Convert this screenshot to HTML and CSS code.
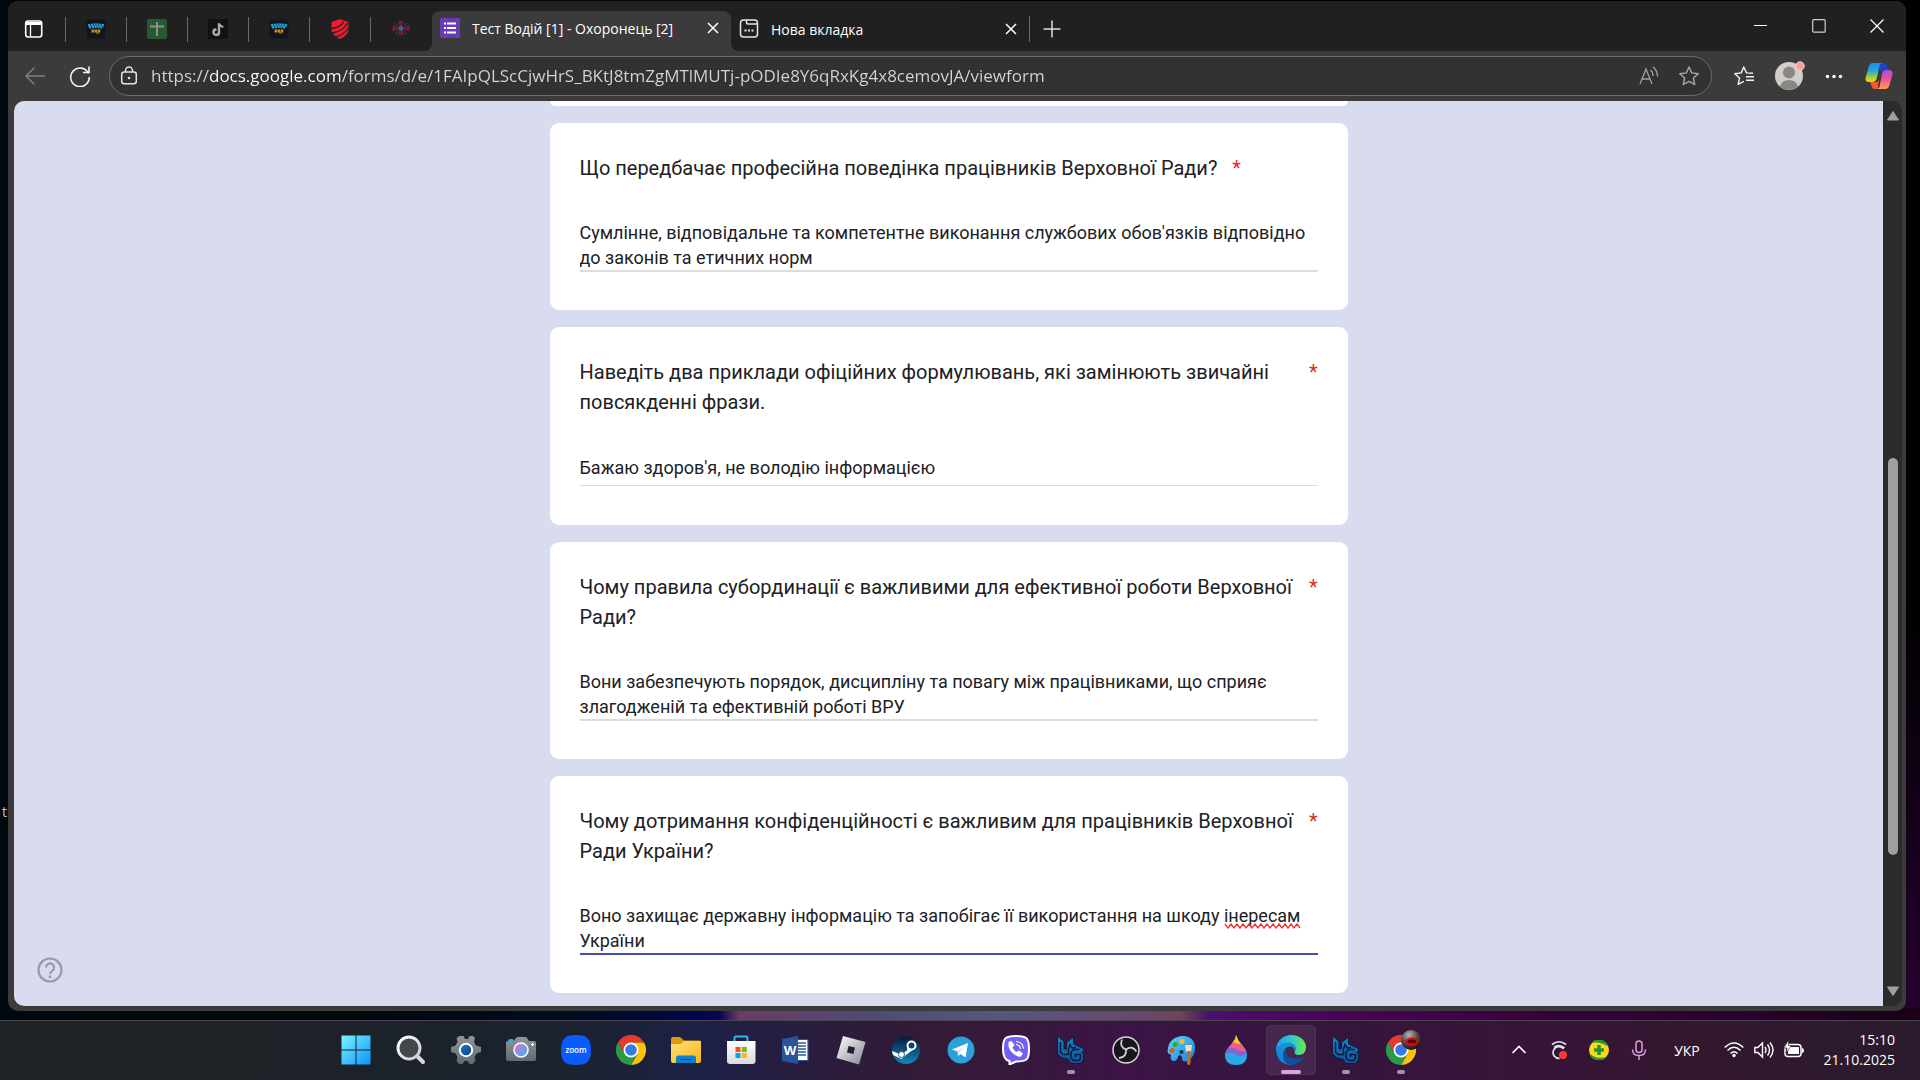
FILE: index.html
```html
<!DOCTYPE html>
<html lang="uk">
<head>
<meta charset="utf-8">
<title>Тест Водій [1] - Охоронець [2]</title>
<link rel="stylesheet" href="styles.css">
</head>
<body>
<svg class="defs" aria-hidden="true">
  <defs>
    <linearGradient id="gWin" x1="0" y1="0" x2="1" y2="1"><stop offset="0" stop-color="#7df3ff"/><stop offset="1" stop-color="#0a94fb"/></linearGradient>
    <linearGradient id="gGear" x1="0" y1="0" x2="0" y2="1"><stop offset="0" stop-color="#8f979d"/><stop offset="1" stop-color="#626a71"/></linearGradient>
    <linearGradient id="gGlass" x1="0" y1="0" x2="1" y2="1"><stop offset="0" stop-color="#ffffff"/><stop offset="1" stop-color="#c4c8cc"/></linearGradient>
    <linearGradient id="gLens" x1="0" y1="0" x2="1" y2="1"><stop offset=".2" stop-color="#c47be0"/><stop offset="1" stop-color="#2fb5ee"/></linearGradient>
    <linearGradient id="gBlue" x1="0" y1="0" x2="1" y2="1"><stop offset="0" stop-color="#1682d0"/><stop offset="1" stop-color="#053c80"/></linearGradient>
    <linearGradient id="gFolder" x1="0" y1="0" x2="1" y2="1"><stop offset="0" stop-color="#ffdf76"/><stop offset="1" stop-color="#f5b81b"/></linearGradient>
    <linearGradient id="gStore" x1="0" y1="0" x2="0" y2="1"><stop offset="0" stop-color="#ffffff"/><stop offset="1" stop-color="#dadada"/></linearGradient>
    <linearGradient id="gRbx" x1="0" y1="0" x2="1" y2="1"><stop offset="0" stop-color="#ffffff"/><stop offset="1" stop-color="#83888e"/></linearGradient>
    <linearGradient id="gSteam" x1="0" y1="0" x2="0" y2="1"><stop offset="0" stop-color="#0b1636"/><stop offset="1" stop-color="#1387b8"/></linearGradient>
    <linearGradient id="gPal" x1="0" y1="0" x2="1" y2="1"><stop offset="0" stop-color="#62d4fb"/><stop offset="1" stop-color="#1583d8"/></linearGradient>
    <linearGradient id="gEdge" x1="0" y1="0" x2="1" y2="0"><stop offset="0" stop-color="#1ba2e8"/><stop offset=".5" stop-color="#2cc5d3"/><stop offset="1" stop-color="#6bea4c"/></linearGradient>
    <linearGradient id="gEdge2" x1="0" y1="0" x2="0" y2="1"><stop offset="0" stop-color="#1792d8"/><stop offset="1" stop-color="#1180dc"/></linearGradient>
    <linearGradient id="gUg" x1="0" y1="0" x2="0" y2="1"><stop offset="0" stop-color="#1587c4"/><stop offset="1" stop-color="#1450a0"/></linearGradient>
    <linearGradient id="gCop1" x1="0" y1="0" x2="0" y2="1"><stop offset="0" stop-color="#1b8cf0"/><stop offset=".4" stop-color="#22a7d8"/><stop offset=".7" stop-color="#8ccb4b"/><stop offset="1" stop-color="#ffd21a"/></linearGradient>
    <linearGradient id="gCop2" x1="0" y1="0" x2="0" y2="1"><stop offset="0" stop-color="#a44ee8"/><stop offset=".5" stop-color="#f0568f"/><stop offset="1" stop-color="#ffa154"/></linearGradient>
    <radialGradient id="gBall" cx=".4" cy=".25" r=".8"><stop offset="0" stop-color="#b9b4b2"/><stop offset=".5" stop-color="#5b4c4c"/><stop offset="1" stop-color="#1c0808"/></radialGradient>
    <symbol id="i-close" viewBox="0 0 20 20"><path d="M5 5l10 10M15 5L5 15" fill="none" stroke="currentColor" stroke-width="1.5"/></symbol>
    <symbol id="i-army" viewBox="0 0 20 20"><rect x=".5" y=".5" width="19" height="19" rx="2.5" fill="#14141f"/><path d="M2 6.500q8-2 16 0M3 8.500q7-1.500 14 0" fill="none" stroke="#1c9fd6" stroke-width="2.400" stroke-dasharray="2.200 .6"/><path d="M5.500 12h9" stroke="#c98d17" stroke-width="3.200" stroke-dasharray="2.600 .5"/><path d="M10 14h3" stroke="#c98d17"/></symbol>
    <symbol id="i-chrome" viewBox="0 0 30 30"><path d="M15 7.500H28A15 15 0 0 0 2 7.500L8.500 18.750z" fill="#e33b2e"/><path d="M28 7.500H15L21.500 18.750 15 30A15 15 0 0 0 28 7.500z" fill="#fdc010"/><path d="M2 7.500L8.500 18.750H21.500L15 30A15 15 0 0 1 2 7.500z" fill="#2c9b48"/><circle cx="15" cy="15" r="7.500" fill="#fff"/><circle cx="15" cy="15" r="5.800" fill="#3b78e7"/></symbol>
    <symbol id="i-ug" viewBox="0 0 30 30"><path d="M1.500 1L8 6.500V14l2.500 0V7.500L17.500 2V9L28.500 14 26 17.500 27.500 19V25L24 28.500H14.500L12.500 24.500 5.500 22.500 1.500 18.500z" fill="url(#gUg)" stroke="#0a1c3c"/><path d="M4.500 7V17L7 19.500H12.500V14L14 9.500 16 13 20 12.500M23.500 14.500H17.500L15 17.500V23L17.500 25.500H22.500L24.500 23.500V19.500H19.500V22" fill="none" stroke="#071a38" stroke-width="1.500"/></symbol>
  </defs>
</svg>

<div class="desktop">
  <span class="desktop-label">tl</span>
  <main class="window">
    <header class="tab-strip">
      <button class="icon-btn workspace" aria-label="Меню вкладок"><svg width="20" height="20" viewBox="0 0 20 20"><rect x="1.700" y="2" width="16" height="16" rx="2.500" fill="none" stroke="#fff" stroke-width="1.600"/><path d="M2 3h15.500v3H2z" fill="#fff"/><path d="M6.500 5v12.500" stroke="#fff" stroke-width="1.300"/></svg></button>
      <nav class="pinned" aria-label="Закріплені вкладки">
        <button class="pin" aria-label="Вкладка 1"><svg width="20" height="20"><use href="#i-army"/></svg></button>
        <button class="pin" aria-label="Вкладка 2"><svg width="20" height="20"><rect width="20" height="20" rx="2" fill="#265b32"/><path d="M10 3v14M3 7.500h14" stroke="#8d8f8d" stroke-width="2"/></svg></button>
        <button class="pin" aria-label="TikTok"><svg width="20" height="20"><rect width="20" height="20" fill="#121212"/><path d="M10.600 4v8.800a2.800 2.800 0 1 1-2.800-2.800M10.600 4q.4 3 4 3.400" fill="none" stroke="#8a2a45" stroke-width="1.800" transform="translate(1 1)"/><path d="M10.600 4v8.800a2.800 2.800 0 1 1-2.800-2.800M10.600 4q.4 3 4 3.400" fill="none" stroke="#4e9a9a" stroke-width="1.800"/><path d="M10.600 4v8.800a2.800 2.800 0 1 1-2.800-2.800M10.600 4q.4 3 4 3.400" fill="none" stroke="#b9b9b9" stroke-width="1.500" transform="translate(.6 .4)"/></svg></button>
        <button class="pin" aria-label="Вкладка 4"><svg width="20" height="20"><use href="#i-army"/></svg></button>
        <button class="pin" aria-label="Вкладка 5"><svg width="20" height="20" viewBox="0 0 20 20"><path d="M1.500 3L10 0l8.500 3v8q-1 6-8.500 9-7-3-8.500-8z" fill="#ea1d2c"/><path d="M1 9.500Q10 9 14 2.500M1.500 14Q12 13 18 4M5 18Q14 16 19 8.500" stroke="#212121" stroke-width="1.300" fill="none"/></svg></button>
        <button class="pin" aria-label="Вкладка 6"><svg width="20" height="20" viewBox="0 0 20 20"><path d="M6.500 2h7l-2.500 5h-2zM6.500 16h7l-2.500-5h-2zM1.500 6l6 2v2.500l-6 2zM18.500 6l-6 2v2.500l6 2z" fill="#6c1b42"/><path d="M4 4l3 3M16 4l-3 3M4 15l3-3M16 15l-3-3" stroke="#4a4040"/><circle cx="10" cy="9.300" r="2.500" fill="#3c6580"/></svg></button>
      </nav>
      <div class="tab active">
        <svg width="20" height="20"><rect width="20" height="20" rx="1" fill="#673ab7"/><path d="M7 5.500h9M7 10h9M7 14.500h9" stroke="#fff" stroke-width="2"/><path d="M4 5.500h2M4 10h2M4 14.500h2" stroke="#fff" stroke-width="2"/></svg>
        <span class="tab-title">Тест Водій [1] - Охоронець [2]</span>
        <button class="icon-btn tab-close" aria-label="Закрити вкладку"><svg width="20" height="20"><use href="#i-close"/></svg></button>
      </div>
      <div class="tab">
        <svg width="20" height="20" viewBox="0 0 20 20" fill="none" stroke="#e6e6e6" stroke-width="1.500"><rect x="1.500" y="1" width="17" height="17" rx="3"/><path d="M7.500 1v2.500q0 1.500 1.500 1.500h9"/><path d="M5.500 11.500h2M9 11.500h2M12.500 11.500h2" stroke-width="2"/></svg>
        <span class="tab-title">Нова вкладка</span>
        <button class="icon-btn tab-close" aria-label="Закрити вкладку"><svg width="20" height="20"><use href="#i-close"/></svg></button>
      </div>
      <button class="icon-btn new-tab" aria-label="Нова вкладка"><svg width="20" height="20"><path d="M10 1.500v17M1.500 10h17" stroke="#ddd" stroke-width="1.500"/></svg></button>
      <div class="window-controls">
        <button class="icon-btn" aria-label="Згорнути"><svg width="14" height="14"><path d="M0 6.500h13" stroke="#fff"/></svg></button>
        <button class="icon-btn" aria-label="Розгорнути"><svg width="14" height="14"><rect x=".7" y=".7" width="12.500" height="12.500" rx="1" fill="none" stroke="#d0d0d0" stroke-width="1.200"/></svg></button>
        <button class="icon-btn" aria-label="Закрити"><svg width="14" height="14"><path d="M.5 .5l13 13M13.500 .5l-13 13" stroke="#fff" stroke-width="1.200"/></svg></button>
      </div>
    </header>

    <div class="toolbar">
      <button class="icon-btn" aria-label="Назад"><svg width="20" height="20" fill="none" stroke="#808080" stroke-width="1.400"><path d="M20 10H1M9.500 1.500L1 10l8.500 8.500"/></svg></button>
      <button class="icon-btn" aria-label="Оновити"><svg width="22" height="22" fill="none" stroke="#f2f2f2" stroke-width="1.600"><path d="M19.500 8.500A9.300 9.300 0 1 0 20.300 12M20 1.500V7.500H14"/></svg></button>
      <div class="address">
        <svg width="20" height="20" fill="none" stroke="#e4e4e4" stroke-width="1.500"><rect x="2.700" y="6" width="14.600" height="11.800" rx="2.500"/><path d="M6.500 6V4.500a3.500 3.500 0 0 1 7 0V6"/><circle cx="10" cy="12" r="1.300" fill="#e4e4e4" stroke="none"/></svg>
        <input class="url" type="text" aria-label="Адреса" value="https://docs.google.com/forms/d/e/1FAIpQLScCjwHrS_BKtJ8tmZgMTlMUTj-pODIe8Y6qRxKg4x8cemovJA/viewform">
        <button class="icon-btn" aria-label="Прочитати вголос"><svg width="20" height="20" fill="none" stroke="#a0a0a0" stroke-width="1.300"><path d="M1 18L7 3l6 15M3 13h8M11.500 4q2.500 2 2.500 6M14 1q4.500 3.500 4.500 9.500"/></svg></button>
        <button class="icon-btn" aria-label="Додати до вибраного"><svg width="20" height="20" fill="none" stroke="#a8a8a8" stroke-width="1.400" stroke-linejoin="round"><path d="M10 1l2.700 5.900 6.500.8-4.800 4.400 1.300 6.400L10 15.400l-5.700 3.100 1.300-6.400L.8 7.700l6.500-.8z"/></svg></button>
      </div>
      <button class="icon-btn" aria-label="Вибране"><svg width="20" height="20" fill="none" stroke="#f2f2f2" stroke-width="1.400" stroke-linejoin="round"><path d="M19 7.300L12.500 6.900 9.800 1 7.200 6.900l-6.400.8 4.700 4.400-1.300 6.400 5.600-3.100M12 10.700h8M12 14.300h8"/></svg></button>
      <button class="icon-btn" aria-label="Профіль"><svg width="32" height="30" viewBox="0 0 32 30"><circle cx="16" cy="15" r="14" fill="#d0cec9"/><circle cx="16" cy="11.500" r="6" fill="#8a8682"/><path d="M7 25.500a9.500 9.500 0 0 1 18 0A14 14 0 0 1 7 25.500" fill="#8a8682"/><circle cx="27" cy="5" r="4.200" fill="#ff9c96" stroke="#e8d8d6"/></svg></button>
      <button class="icon-btn" aria-label="Параметри"><svg width="20" height="20" fill="#fff"><circle cx="3.500" cy="10.500" r="1.700"/><circle cx="10" cy="10.500" r="1.700"/><circle cx="16.500" cy="10.500" r="1.700"/></svg></button>
      <button class="icon-btn" aria-label="Copilot"><svg width="28" height="28" viewBox="0 0 28 28"><path d="M15 1h4q2 0 2.600 2l1.400 5h-4q-3 0-4 3z" fill="#1747c8"/><path d="M5 20h7l2-2-1 7q-.5 1.500 1 2H9.500q-2 0-2.500-2z" fill="#f4592c"/><path d="M8 1h9.500q-2.200.5-2.700 2L12 15.500q-1 4.500-5 4.500H4q-4 0-3.500-4L4 4q1-3 4-3z" fill="url(#gCop1)"/><path d="M20 8h4q4 0 3.500 4L24.500 23q-1 4-4.500 4h-8q2-.5 2.500-2L17 12q1-4 3-4z" fill="url(#gCop2)"/></svg></button>
    </div>

    <div class="viewport">
      <form class="page">
        <section class="card card-tail" aria-hidden="true"></section>
        <section class="card">
          <label class="question" for="a1"><span>Що передбачає професійна поведінка працівників Верховної Ради?</span><span class="required">*</span></label>
          <div class="answer"><textarea id="a1" rows="2" spellcheck="false">Сумлінне, відповідальне та компетентне виконання службових обов'язків відповідно до законів та етичних норм</textarea></div>
        </section>
        <section class="card">
          <label class="question" for="a2"><span>Наведіть два приклади офіційних формулювань, які замінюють звичайні повсякденні фрази.</span><span class="required">*</span></label>
          <div class="answer short"><input id="a2" type="text" spellcheck="false" value="Бажаю здоров'я, не володію інформацією"></div>
        </section>
        <section class="card">
          <label class="question" for="a3"><span>Чому правила субординації є важливими для ефективної роботи Верховної Ради?</span><span class="required">*</span></label>
          <div class="answer"><textarea id="a3" rows="2" spellcheck="false">Вони забезпечують порядок, дисципліну та повагу між працівниками, що сприяє злагодженій та ефективній роботі ВРУ</textarea></div>
        </section>
        <section class="card">
          <label class="question" for="a4"><span>Чому дотримання конфіденційності є важливим для працівників Верховної Ради України?</span><span class="required">*</span></label>
          <div class="answer focused"><textarea id="a4" rows="2" spellcheck="false">Воно захищає державну інформацію та запобігає її використання на шкоду інересам України</textarea>
            <svg class="squiggle" width="78" height="6" aria-hidden="true"><path d="M1 1l3 4 3-4 3 4 3-4 3 4 3-4 3 4 3-4 3 4 3-4 3 4 3-4 3 4 3-4 3 4 3-4 3 4 3-4 3 4 3-4 3 4 3-4 3 4 3-4 3 4" fill="none" stroke="#f0312c" stroke-width="1.300"/></svg></div>
        </section>
        <button type="button" class="icon-btn help" aria-label="Довідка"><svg width="26" height="26" fill="none" stroke="#979ba6" stroke-width="2.200"><circle cx="13" cy="13" r="11.500"/><path d="M9 10.500a4 4 0 1 1 6.500 3.100Q13 15 13 17" /><path d="M13 18.500v2.500" stroke-width="2.500"/></svg></button>
      </form>
      <div class="scrollbar">
        <button class="icon-btn" aria-label="Прокрутити вгору"><svg width="14" height="12"><path d="M7 1.500L12.500 10H1.500z" fill="#a0a0a0" stroke="#a0a0a0" stroke-linejoin="round"/></svg></button>
        <div class="track"><div class="thumb"></div></div>
        <button class="icon-btn" aria-label="Прокрутити вниз"><svg width="14" height="12"><path d="M7 10.500L1.500 2h11z" fill="#a0a0a0" stroke="#a0a0a0" stroke-linejoin="round"/></svg></button>
      </div>
    </div>
  </main>

  <footer class="taskbar">
    <nav class="apps" aria-label="Панель завдань">
      <button class="app" aria-label="Пуск"><svg width="30" height="30"><path d="M.5 .5h14v14h-14zM15.500 .5h14v14h-14zM.5 15.500h14v14h-14zM15.500 15.500h14v14h-14z" fill="url(#gWin)"/></svg></button>
      <button class="app" aria-label="Пошук"><svg width="30" height="30"><path d="M20 20l7 7" stroke="#d6d8da" stroke-width="4" stroke-linecap="round"/><circle cx="13" cy="13" r="11" fill="#42484c" stroke="url(#gGlass)" stroke-width="3"/></svg></button>
      <button class="app" aria-label="Налаштування"><svg width="30" height="30" viewBox="0 0 30 30"><path d="M8.500 1h4l1.500 3h3l1.500-3h3.500l2 2-1 4 2 3.500 5 1.500v5l-4.500 1.500-2 3.500 1 4-3 3h-3l-2-3h-3l-2 3h-3.500l-2.500-3 1-4-2-3.500L0 17v-5l4.500-1.500 2-3.500-1-4z" fill="url(#gGear)"/><circle cx="15" cy="15" r="6.200" fill="url(#gBlue)" stroke="#fff" stroke-width="2"/></svg></button>
      <button class="app" aria-label="Камера"><svg width="30" height="30"><path d="M2 6q0-2 2-2h2q2 0 2 2v3H2z" fill="#2aa7dc"/><path d="M0 8q0-2 2-2h6l2-3q1-1 2-1h7q1 0 2 1l2 3h5q2 0 2 2v16q0 2-2 2H2q-2 0-2-2z" fill="url(#gGear)"/><circle cx="15" cy="15" r="7" fill="url(#gLens)" stroke="#fff" stroke-width="1.500"/><path d="M26.500 8v3M25 9.500h3" stroke="#fff"/></svg></button>
      <button class="app" aria-label="Zoom"><svg width="30" height="30"><path d="M15 0C26 0 30 4 30 15S26 30 15 30 0 26 0 15 4 0 15 0z" fill="#0b5cff"/><text x="15" y="17.500" class="zoom-text">zoom</text></svg></button>
      <button class="app" aria-label="Chrome"><svg width="30" height="30"><use href="#i-chrome"/></svg></button>
      <button class="app" aria-label="Провідник"><svg width="30" height="30"><path d="M0 4q0-2 2-2h7l4 3.500h15q2 0 2 2V14H0z" fill="#dc9a0c"/><path d="M0 9h10l3-3h17v20q0 2-2 2H2q-2 0-2-2z" fill="url(#gFolder)"/><path d="M5 28v-5q0-2.500 2.500-2.500h15Q25 20.500 25 23v5z" fill="#0f7fd0"/><path d="M9 24.500h12" stroke="#0a4f94" stroke-width="1.200"/></svg></button>
      <button class="app" aria-label="Microsoft Store"><svg width="30" height="30"><path d="M8.500 7V3q0-1.500 1.500-1.500h10q1.500 0 1.500 1.500v4" fill="none" stroke="#2bb8ee" stroke-width="2"/><path d="M1 6h28.500v20q0 3-3 3H4q-3 0-3-3z" fill="url(#gStore)"/><path d="M9.500 12h5v5h-5z" fill="#f1511b"/><path d="M15.800 12h5v5h-5z" fill="#80bb03"/><path d="M9.500 18h5v5h-5z" fill="#06a4ee"/><path d="M15.800 18h5v5h-5z" fill="#fbb90c"/></svg></button>
      <button class="app" aria-label="Word"><svg width="30" height="30"><path d="M14 4.500h13v21H14z" fill="#fff" stroke="#2a5699" stroke-width="1.200"/><path d="M16 8h9M16 11h9M16 14h9M16 17h9M16 20h9" stroke="#2a5699" stroke-width="1.400"/><path d="M1 4l16-3v28L1 26z" fill="#2a5699"/><text x="9" y="20" class="word-text">W</text></svg></button>
      <button class="app" aria-label="Roblox"><svg width="30" height="30"><path d="M7 1l22.500 6L23 29.500.5 23z" fill="url(#gRbx)"/><path d="M12.500 11l6.500 1.500-1.500 6.500-6.500-1.500z" fill="#2c1b38"/></svg></button>
      <button class="app" aria-label="Steam"><svg width="30" height="30"><circle cx="15" cy="15" r="14" fill="url(#gSteam)"/><path d="M1 16l9 3.500 6-4L17 9l6 5-8 6-4.500 4L2 20z" fill="#fff"/><circle cx="20.500" cy="10.500" r="4" fill="#1b3e64" stroke="#fff" stroke-width="2"/><circle cx="10.500" cy="19.500" r="3" fill="#fff" stroke="#2c5b85"/></svg></button>
      <button class="app" aria-label="Telegram"><svg width="30" height="30"><circle cx="15" cy="15" r="13.500" fill="#2ca0da"/><path d="M6 14.500L22 8l-2.500 14.500-5-3.500-2.500 2-.5-4.500z" fill="#fff"/><path d="M11.500 16.500l7.500-5.500-6 6.500-.7 3z" fill="#bcdcef"/></svg></button>
      <button class="app" aria-label="Viber"><svg width="30" height="30"><path d="M15 1c11 0 13 2 13 13s-2 12.500-13 12.500L8.500 29.500V26Q2 25 2 14C2 3 4 1 15 1z" fill="#7360f2" stroke="#fff" stroke-width="2"/><path d="M7.500 7l3-1 3 4-2 2.500q1 3 4 4.500l2.500-1.500 4 3-2 3q-2 1-5-1-6-3.500-7.500-9z" fill="#fff"/><path d="M15 9.500q4 .5 4.500 4.500M15 6.500q7 .5 7.500 7" fill="none" stroke="#fff" stroke-width="1.200"/></svg></button>
      <button class="app running" aria-label="UG"><svg width="30" height="30"><use href="#i-ug"/></svg></button>
      <button class="app" aria-label="OBS"><svg width="30" height="30" fill="none"><circle cx="15" cy="15" r="13" fill="#17161a" stroke="#d6d6d8" stroke-width="1.500"/><path d="M15 14.500Q8 12 11 4.500M15 14.500Q21 10 25.500 16.500M15 14.500Q16 22 8 23" stroke="#cfcfd2" stroke-width="1.800"/></svg></button>
      <button class="app" aria-label="Paint"><svg width="30" height="30"><path d="M17 1c8 0 12 5 12 12 0 6-3 11-8 13-3 1-5 0-5-3 0-3-3-4-4-1-1 5-6 5-7 2-1-2 1-4-1-5-2 0-3-2-2-6C3 6 9 1 17 1z" fill="url(#gPal)"/><circle cx="16" cy="6.500" r="2.500" fill="#fcc21c"/><circle cx="9" cy="9.500" r="2.500" fill="#32a834"/><circle cx="6" cy="15.500" r="2.500" fill="#e2532a"/><circle cx="15.500" cy="17" r="2" fill="#1b3060"/><path d="M19 10h7l-1 7h-5z" fill="#f2dcb4"/><path d="M21 16h3.500v12q0 2-1.700 2T21 28z" fill="#c06f17"/></svg></button>
      <button class="app" aria-label="Paint 3D"><svg width="30" height="30"><path d="M15 0q2 6 7 11 4 5 4 9 0 10-11 10T4 20q0-4 4-8 6-6 7-12z" fill="#29a9ea"/><path d="M4 19q7-3 12 1 5 3 9.500-2.500-.5-4-4.500-7L12 8q-6 6-8 11z" fill="#8a5fd0"/><path d="M7 13q6-1 10 2 4 2 8 1-2-4-5-7l-7-4q-2 4-6 8z" fill="#ee5f87"/><path d="M15 0q2 6 5 9-5 0-8-2 3-3 3-7z" fill="#ffcb12"/></svg></button>
      <button class="app current" aria-label="Edge"><svg width="30" height="30"><path d="M0 14C1 5 8 0 15 0c9 0 15 6 15 12 0 5-3 8-7 8-4 0-5-2-4-4 2-4-1-7-5-7-6 0-10 5-14 5z" fill="url(#gEdge)"/><path d="M0 14c3-5 8-6.500 13-6.500 4 0 7 3 6 7l-1 1c0-3-2-4-4-4-4 0-6 4-6 7 0 5 4 11 10 11-9 2-18-4-18-15.500z" fill="url(#gEdge2)"/><path d="M12 12q-4 3-1 8 5 6 17 2-5 8-13 8-8-1-8-10 0-6 5-8z" fill="#0f4f9c"/></svg></button>
      <button class="app running" aria-label="UG"><svg width="30" height="30"><use href="#i-ug"/></svg></button>
      <button class="app running" aria-label="Chrome"><svg width="40" height="40" viewBox="-5 -5 40 40"><use href="#i-chrome" width="30" height="30"/><circle cx="25" cy="5" r="10" fill="url(#gBall)"/><ellipse cx="26" cy="6.500" rx="5.500" ry="3" fill="#5c0508" stroke="#d80f18" stroke-width="2"/></svg></button>
    </nav>
    <div class="tray">
      <button class="icon-btn" aria-label="Приховані піктограми"><svg width="20" height="20" fill="none"><path d="M3.500 13L10 6.500l6.500 6.500" stroke="#fff" stroke-width="1.600"/></svg></button>
      <button class="icon-btn" aria-label="Запис"><svg width="20" height="20" fill="none" stroke="#dfe3ea" stroke-width="1.700"><path d="M3 4.500Q10-1 17 4.500M14.500 9a5.800 5.800 0 1 0-4 9.300M5 7.500Q10 3.500 15.500 8"/><circle cx="14" cy="15" r="4" fill="#fb3b30" stroke="none"/></svg></button>
      <button class="icon-btn" aria-label="Антивірус"><svg width="20" height="20"><circle cx="10" cy="10" r="10" fill="#f8d91c"/><path d="M4 2a10 10 0 0 1 14.500 3.500Q12 1 4 2M1.500 15A10 10 0 0 0 16 18Q7 20 1.500 15" fill="#239a35" stroke="#239a35" stroke-width="1.500"/><path d="M10 5v10M5 10h10" stroke="#28912a" stroke-width="3.500"/></svg></button>
      <button class="icon-btn" aria-label="Мікрофон"><svg width="20" height="20" fill="none" stroke="#d79fdc" stroke-width="1.500"><rect x="7" y="1" width="6" height="11.500" rx="3"/><path d="M3.500 9.500q0 6 6.500 6t6.500-6M10 15.500V20"/></svg></button>
      <button class="lang">УКР</button>
      <button class="status" aria-label="Мережа, гучність, акумулятор">
        <svg width="20" height="20" fill="none" stroke="#fff" stroke-width="1.500"><path d="M.7 7.500q9.300-9 18.600 0M3.500 10.500q6.500-6.500 13 0M6.500 13.500q3.500-3.500 7 0"/><circle cx="10" cy="15.500" r="1.700" fill="#fff" stroke="none"/></svg>
        <svg width="20" height="20" fill="none" stroke="#fff" stroke-width="1.400"><path d="M.8 7.500h3L8.500 3v14l-4.700-4.500h-3zM11 7q2 3 0 6M13.500 4.500q4 5.500 0 11M16 2.500q6 7.500 0 15"/></svg>
        <svg width="20" height="20"><rect x="1" y="4.500" width="16" height="12" rx="3" fill="none" stroke="#fff" stroke-width="1.500"/><path d="M5 7h10v7H4v-3z" fill="#fff"/><path d="M18 8q2 0 2 2.500T18 13z" fill="#fff"/><path d="M4.500 0L0 8h3l-1 5 5.500-7.500H4.500z" fill="#fff" stroke="#2f1a2f" stroke-width=".6"/></svg>
      </button>
      <button class="clock"><time>15:10</time><time>21.10.2025</time></button>
    </div>
  </footer>
</div>
</body>
</html>
```
FILE: styles.css
```css
* { box-sizing: border-box; }

body {
  margin: 0;
  font-family: "Open Sans", "Noto Sans", sans-serif;
  font-size: 14px;
  color: #fff;
}

button, input, textarea {
  margin: 0;
  padding: 0;
  border: 0;
  background: none;
  color: inherit;
  font: inherit;
  outline: none;
}

svg { display: block; flex: none; }
.defs { position: absolute; width: 0; height: 0; }

.icon-btn {
  display: flex;
  align-items: center;
  justify-content: center;
  flex: none;
}

/* Desktop and browser window */

.desktop {
  position: relative;
  display: flex;
  flex-direction: column;
  height: 100vh;
  overflow: hidden;
  background:
    linear-gradient(90deg, #00080f 0%, #00080f 20%, #000c20 30%, #00064a 36%, #0a0650 37.500%, #6b3a66 38.500%, #4f4a74 45%, #555682 52%, #6b466c 60%, #6f4454 61.500%, #4a0f6c 63%, #4a0258 70%, #38003c 80%, #2c0030 90%, #1c0018 98%) bottom / 100% 72px no-repeat,
    linear-gradient(90deg, #00080f 50%, transparent 50%),
    linear-gradient(180deg, #000 0%, #000 55%, #22002a 90%);
}

.desktop-label {
  position: absolute;
  left: 2px;
  top: 802px;
  color: #b9c3cf;
  line-height: 20px;
}

.window {
  position: relative;
  flex: 1;
  min-height: 0;
  display: flex;
  flex-direction: column;
  margin: 1px 14px 9px 8px;
  border-radius: 10px;
  background: #3b3b3b;
  overflow: hidden;
}

.tab-strip {
  display: flex;
  align-items: center;
  height: 50px;
  padding-top: 6px;
  background: #202020;
}

.workspace { width: 52px; }

.pinned { display: flex; margin: 0 1px 0 5px; }

.pin {
  display: flex;
  align-items: center;
  justify-content: center;
  width: 61px;
  height: 25px;
  padding-right: 1px;
  border-left: 1px solid #6a6a6a;
}

.tab {
  position: relative;
  display: flex;
  align-items: center;
  gap: 12px;
  width: 299px;
  height: 26px;
  padding: 0 8px;
  border-right: 1px solid #6a6a6a;
}

.tab.active {
  align-self: flex-end;
  height: 40px;
  padding-bottom: 6px;
  margin-top: -2px;
  border: 0;
  border-radius: 8px 8px 0 0;
  background: #3b3b3b;
}

.tab.active::before,
.tab.active::after {
  content: "";
  position: absolute;
  bottom: 0;
  width: 8px;
  height: 8px;
}

.tab.active::before { left: -8px; background: radial-gradient(circle at 0 0, #202020 8px, #3b3b3b 8px); }
.tab.active::after { right: -8px; background: radial-gradient(circle at 100% 0, #202020 8px, #3b3b3b 8px); }

.tab-title { flex: 1; white-space: nowrap; font-size: 14px; }
.new-tab { width: 44px; }

.window-controls { display: flex; margin-left: auto; padding-bottom: 7px; }
.window-controls .icon-btn { width: 58px; height: 30px; }

.toolbar {
  display: flex;
  align-items: center;
  height: 50px;
  padding: 0 5px 0 4px;
}

.toolbar > .icon-btn { width: 45px; }

.address {
  flex: 1;
  display: flex;
  align-items: center;
  gap: 12px;
  height: 40px;
  margin: 0 9px 0 7px;
  padding: 0 8px 0 9px;
  border: 1px solid #6c6c6c;
  border-radius: 20px;
  background: #323232;
}

.address .icon-btn { width: 28px; }

.url {
  flex: 1;
  min-width: 0;
  height: 30px;
  padding-bottom: 2px;
  font-size: 17px;
  color: #d6d6d6;
  background: linear-gradient(90deg, #d6d6d6 57px, #fff 57px, #fff 189px, #d6d6d6 189px);
  -webkit-background-clip: text;
  background-clip: text;
  -webkit-text-fill-color: transparent;
}

/* Form page */

.viewport {
  flex: 1;
  min-height: 0;
  display: flex;
  margin: 0 4px 5px 6px;
  border-radius: 10px;
  overflow: hidden;
}

.page {
  position: relative;
  flex: 1;
  display: flex;
  flex-direction: column;
  align-items: center;
  gap: 17px;
  background: #d9dbef;
  font-family: Roboto, sans-serif;
  color: #202124;
  overflow: hidden;
}

.card {
  flex: none;
  width: 100%;
  max-width: 798px;
  padding: 30px 30px 38px;
  border-radius: 9px;
  background: #fff;
}

.card-tail { height: 5px; padding: 0; border-radius: 0 0 9px 9px; }

.question {
  display: flex;
  margin-bottom: 37px;
  font-size: 20px;
  line-height: 30px;
}

.required { padding-left: 15px; color: #d93025; }

.answer { position: relative; font-size: 18px; line-height: 25px; }
.answer.short { padding-bottom: 1px; }

.answer textarea {
  display: block;
  width: 100%;
  height: 52px;
  border-bottom: 2px solid #dcdcde;
  resize: none;
  overflow: hidden;
}

.answer input {
  display: block;
  width: 100%;
  height: 32px;
  padding-bottom: 5px;
  border-bottom: 1px solid #dcdcde;
}

.answer.focused textarea { border-color: #3f51b5; }

.squiggle { position: absolute; left: 644px; top: 20px; }

.help { position: absolute; left: 22px; bottom: 22px; width: 28px; height: 28px; }

.scrollbar {
  display: flex;
  flex-direction: column;
  align-items: center;
  justify-content: space-between;
  width: 19px;
  padding: 9px 0;
  background: #2b2b2b;
}

.track { flex: 1; display: flex; flex-direction: column; width: 10px; padding: 336px 0 130px; }
.thumb { flex: 1; border-radius: 5px; background: #9f9f9f; }

/* Taskbar */

.taskbar {
  position: relative;
  display: flex;
  align-items: center;
  height: 60px;
  padding-bottom: 1px;
  border-top: 1px solid #4a4650;
  background: linear-gradient(90deg, #1f2325 0%, #1c2229 20%, #1b2230 30%, #1e2046 37%, #2b1c3c 43%, #331b36 49%, #3b1445 59%, #35153c 70%, #38133a 78%, #33172f 88%, #291b2c 100%);
}

.apps { flex: 1; display: flex; justify-content: flex-end; gap: 5px; }

.app {
  position: relative;
  display: flex;
  align-items: center;
  justify-content: center;
  width: 50px;
  height: 50px;
  border-radius: 5px;
}

.app.current { background: rgba(255, 255, 255, .08); border: 1px solid rgba(255, 255, 255, .06); }

.app.running::after,
.app.current::after {
  content: "";
  position: absolute;
  bottom: 1px;
  width: 8px;
  height: 4px;
  border-radius: 2px;
  background: #a792ac;
}

.app.current::after { bottom: 0; width: 20px; background: #df9fe6; }

.zoom-text { font: 600 8px "Open Sans", sans-serif; fill: #fff; text-anchor: middle; }
.word-text { font: 700 13px "Open Sans", sans-serif; fill: #fff; text-anchor: middle; }

.tray { display: flex; align-items: center; margin-left: 73px; padding-right: 25px; }
.tray .icon-btn { width: 40px; height: 40px; }
.lang { width: 56px; text-align: center; }
.status { display: flex; gap: 10px; padding: 0 9px; }

.clock {
  display: flex;
  flex-direction: column;
  width: 82px;
  text-align: right;
  line-height: 20px;
}
```
